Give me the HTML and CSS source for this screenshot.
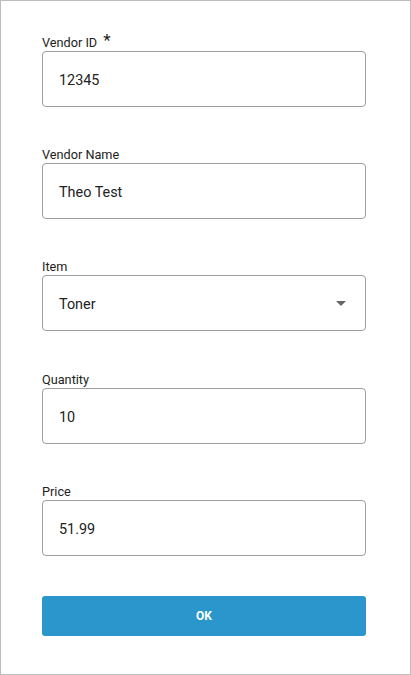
FILE: index.html
```html
<!DOCTYPE html>
<html>
<head>
<meta charset="utf-8">
<link rel="stylesheet" href="styles.css">
</head>
<body>
<div class="frame">
  <form class="form">
    <div class="field">
      <label class="label">Vendor ID <span class="req">*</span></label>
      <div class="box">12345</div>
    </div>
    <div class="field">
      <label class="label">Vendor Name</label>
      <div class="box">Theo Test</div>
    </div>
    <div class="field">
      <label class="label">Item</label>
      <div class="box select">Toner<span class="caret"></span></div>
    </div>
    <div class="field">
      <label class="label">Quantity</label>
      <div class="box">10</div>
    </div>
    <div class="field">
      <label class="label">Price</label>
      <div class="box">51.99</div>
    </div>
    <div class="btn">OK</div>
  </form>
</div>
</body>
</html>
```
FILE: styles.css
```css
html, body {
  margin: 0;
  padding: 0;
  background: #fff;
}
body {
  font-family: Roboto, "Liberation Sans", sans-serif;
  color: #222;
}
.frame {
  box-sizing: border-box;
  width: 411px;
  height: 675px;
  border: 1px solid #bdbdbd;
  padding: 35px 44px 0 41px;
}
.form {
  display: flex;
  flex-direction: column;
}
.field {
  display: flex;
  flex-direction: column;
  margin-bottom: 41.2px;
}
.label {
  font-size: 12.7px;
  line-height: 14px;
  height: 14px;
  margin-bottom: 1px;
  color: #222;
}
.req {
  display: inline-block;
  margin-left: 3px;
  font-size: 17px;
  line-height: 10px;
  position: relative;
  top: -1px;
}
.box {
  box-sizing: border-box;
  height: 56px;
  border: 1px solid #9e9e9e;
  border-radius: 4px;
  padding: 3px 16px 0 16px;
  display: flex;
  align-items: center;
  font-size: 14.4px;
  color: #222;
}
.select {
  justify-content: space-between;
  padding-right: 19px;
}
.caret {
  width: 0;
  height: 0;
  border-left: 5px solid transparent;
  border-right: 5px solid transparent;
  border-top: 5px solid #666;
  margin-top: -3px;
}
.btn {
  margin-top: -1px;
  height: 40px;
  border-radius: 3px;
  background: #2b96cc;
  color: #fff;
  font-weight: 700;
  font-size: 12px;
  display: flex;
  align-items: center;
  justify-content: center;
}
```
